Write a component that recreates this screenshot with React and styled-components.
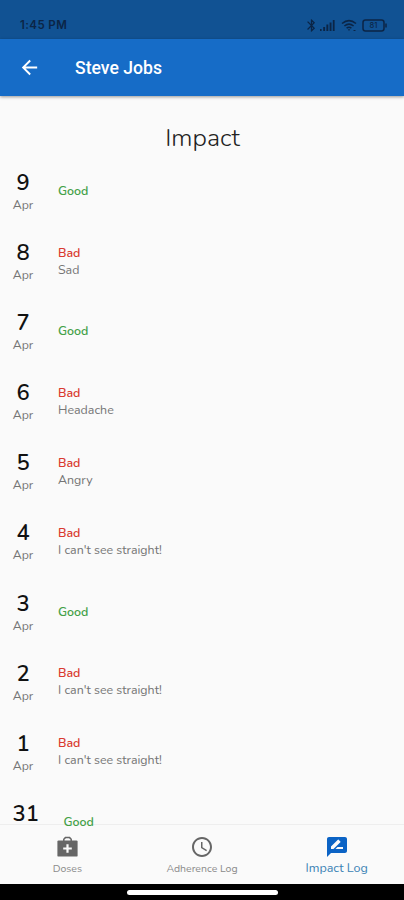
import styled, { createGlobalStyle } from "styled-components";
import { MdAccessTime, MdArrowBack, MdBluetooth, MdRateReview } from "react-icons/md";

const entries = [
  { day: 9, month: "Apr", mood: "Good" },
  { day: 8, month: "Apr", mood: "Bad", note: "Sad" },
  { day: 7, month: "Apr", mood: "Good" },
  { day: 6, month: "Apr", mood: "Bad", note: "Headache" },
  { day: 5, month: "Apr", mood: "Bad", note: "Angry" },
  { day: 4, month: "Apr", mood: "Bad", note: "I can't see straight!" },
  { day: 3, month: "Apr", mood: "Good" },
  { day: 2, month: "Apr", mood: "Bad", note: "I can't see straight!" },
  { day: 1, month: "Apr", mood: "Bad", note: "I can't see straight!" },
  { day: 31, mood: "Good" },
];

const GlobalStyle = createGlobalStyle`
  * {
    box-sizing: border-box;
  }

  body {
    margin: 0;
    background-color: #fafafa;
    font-family: Nunito, "Open Sans", sans-serif;
  }
`

const Screen = styled.div`
  width: 404px;
  height: 900px;
  overflow: hidden;
  background-color: #fafafa;

  display: flex;
  flex-direction: column;
`

const StatusBar = styled.div`
  height: 39px;
  flex-shrink: 0;
  padding: 11px 17px 0 20px;
  background-color: #115293;
  color: #0b2546;

  display: flex;
  align-items: center;
  justify-content: space-between;
`

const Clock = styled.span`
  font-family: Inter, sans-serif;
  font-size: 11.5px;
  font-weight: 600;
  letter-spacing: 0.4px;
`

const StatusIcons = styled.div`
  display: flex;
  align-items: center;
  gap: 5px;

  & > svg:first-child {
    margin-right: -4px;
  }
`

const AppBar = styled.header`
  height: 57px;
  flex-shrink: 0;
  padding-left: 18px;
  background-color: #166cc7;
  color: #ffffff;
  box-shadow: 0 1px 3px rgba(0, 0, 0, 0.4);

  display: flex;
  align-items: center;
  gap: 34px;
`

const AppTitle = styled.h1`
  margin: 0;
  font-family: Roboto, sans-serif;
  font-size: 17.6px;
  font-weight: 500;
`

const Content = styled.main`
  flex: 1;
  min-height: 0;
  margin-bottom: -5px;
  overflow: hidden;
  position: relative;
  z-index: 1;
`

const Heading = styled.h2`
  margin: 24px 0 0;
  height: 48px;
  line-height: 37px;
  padding-left: 1px;
  color: #222222;
  font-size: 25px;
  font-weight: 300;
  text-align: center;
`

const Row = styled.div`
  height: ${({ $last }) => $last ? "40px" : "70.1px"};
  padding-left: 12.5px;

  display: flex;
  gap: 24.5px;
`

const DateColumn = styled.div`
  min-width: 21px;

  display: flex;
  flex-direction: column;
  align-items: center;
`

const Day = styled.span`
  height: 28px;
  line-height: 30px;
  color: #111111;
  font-size: 22px;
  font-weight: 600;
`

const Month = styled.span`
  height: 18px;
  line-height: 18px;
  color: #757575;
  font-size: 12.3px;
`

const Entry = styled.div`
  height: 46px;

  display: flex;
  flex-direction: column;
  justify-content: center;
`

const Mood = styled.span`
  height: 16px;
  line-height: 16px;
  color: ${({ $good }) => $good ? "#43a047" : "#d93a30"};
  font-size: 12.4px;
  font-weight: 600;
`

const Note = styled.span`
  height: 17px;
  line-height: 17px;
  color: #757575;
  font-size: 12.4px;
`

const Tabs = styled.nav`
  height: 60px;
  flex-shrink: 0;
  border-top: 1px solid #eeeeee;
  background-color: #fafafa;

  display: grid;
  grid-template-columns: repeat(3, 1fr);
`

const Tab = styled.div`
  padding-top: 10px;
  color: ${({ $active }) => $active ? "#0b63c5" : "#666666"};

  display: flex;
  flex-direction: column;
  align-items: center;

  & > span {
    height: 18px;
    line-height: ${({ $active }) => $active ? "17px" : "20px"};
    color: ${({ $active }) => $active ? "#3a83b5" : "#8a8a8a"};
    font-size: ${({ $active }) => $active ? "12.5px" : "10.5px"};
    white-space: nowrap;
  }
`

const SystemBar = styled.div`
  height: 16px;
  flex-shrink: 0;
  background-color: #000000;

  display: flex;
  align-items: center;
  justify-content: center;
`

const HomeIndicator = styled.div`
  width: 151px;
  height: 5px;
  border-radius: 3px;
  background-color: #ffffff;
`

const Signal = () => (
  <svg width="16" height="13" viewBox="0 0 16 13" fill="currentColor">
    <rect x="0" y="10" width="1.6" height="2" />
    <rect x="3.2" y="8" width="1.9" height="4" />
    <rect x="6.4" y="5.5" width="1.9" height="6.5" />
    <rect x="9.6" y="3.5" width="1.9" height="8.5" />
    <rect x="12.8" y="1" width="1.8" height="11" />
  </svg>
);

const Wifi = () => (
  <svg width="16" height="13" viewBox="0 0 16 13" fill="none" stroke="currentColor" strokeWidth="1.6">
    <path d="M1 4.5Q8 -1.2 15 4.5M3.4 7Q8 3.3 12.6 7M5.6 9.2Q8 7.4 10.4 9.2" />
    <path d="M6.8 10.2h2.4L8 12z" fill="currentColor" stroke="none" />
    <path d="M12.5 11.5h2" strokeWidth="1" />
  </svg>
);

const Battery = () => (
  <svg width="25" height="13" viewBox="0 0 25 13" fill="none" stroke="currentColor" strokeWidth="1.5">
    <rect x="1" y="1" width="21" height="11" rx="2.5" />
    <path d="M24 4.5v4" />
    <text x="11.5" y="9.2" fill="currentColor" stroke="none" fontFamily="Inter, sans-serif" fontSize="7.5" fontWeight="500" textAnchor="middle">81</text>
  </svg>
);

const MedicalBag = () => (
  <svg width="24" height="24" viewBox="0 0 24 24">
    <path d="M8.8 6V4.2L10.4 2.6h4.2l1.6 1.6V6" fill="none" stroke="currentColor" strokeWidth="1.5" />
    <rect x="2.4" y="5.4" width="20.2" height="16.2" rx="1.2" fill="currentColor" />
    <path d="M12.5 9.2v8.6M8.2 13.5h8.6" stroke="#fafafa" strokeWidth="2.2" />
  </svg>
);

const LogRow = ({ day, month, mood, note, last }) => (
  <Row $last={last}>
    <DateColumn>
      <Day>{day}</Day>
      {month && <Month>{month}</Month>}
    </DateColumn>
    <Entry>
      <Mood $good={mood === "Good"}>{mood}</Mood>
      {note && <Note>{note}</Note>}
    </Entry>
  </Row>
);

const App = () => {
  return (
    <Screen>
      <GlobalStyle />
      <StatusBar>
        <Clock>1:45 PM</Clock>
        <StatusIcons>
          <MdBluetooth size={15} />
          <Signal />
          <Wifi />
          <Battery />
        </StatusIcons>
      </StatusBar>
      <AppBar>
        <MdArrowBack size={23} />
        <AppTitle>Steve Jobs</AppTitle>
      </AppBar>
      <Content>
        <Heading>Impact</Heading>
        {entries.map((entry, i) => <LogRow key={entry.day} last={i === entries.length - 1} {...entry} />)}
      </Content>
      <Tabs>
        <Tab><MedicalBag /><span>Doses</span></Tab>
        <Tab><MdAccessTime size={24} /><span>Adherence Log</span></Tab>
        <Tab $active><MdRateReview size={24} /><span>Impact Log</span></Tab>
      </Tabs>
      <SystemBar>
        <HomeIndicator />
      </SystemBar>
    </Screen>
  )
};

export default App;
